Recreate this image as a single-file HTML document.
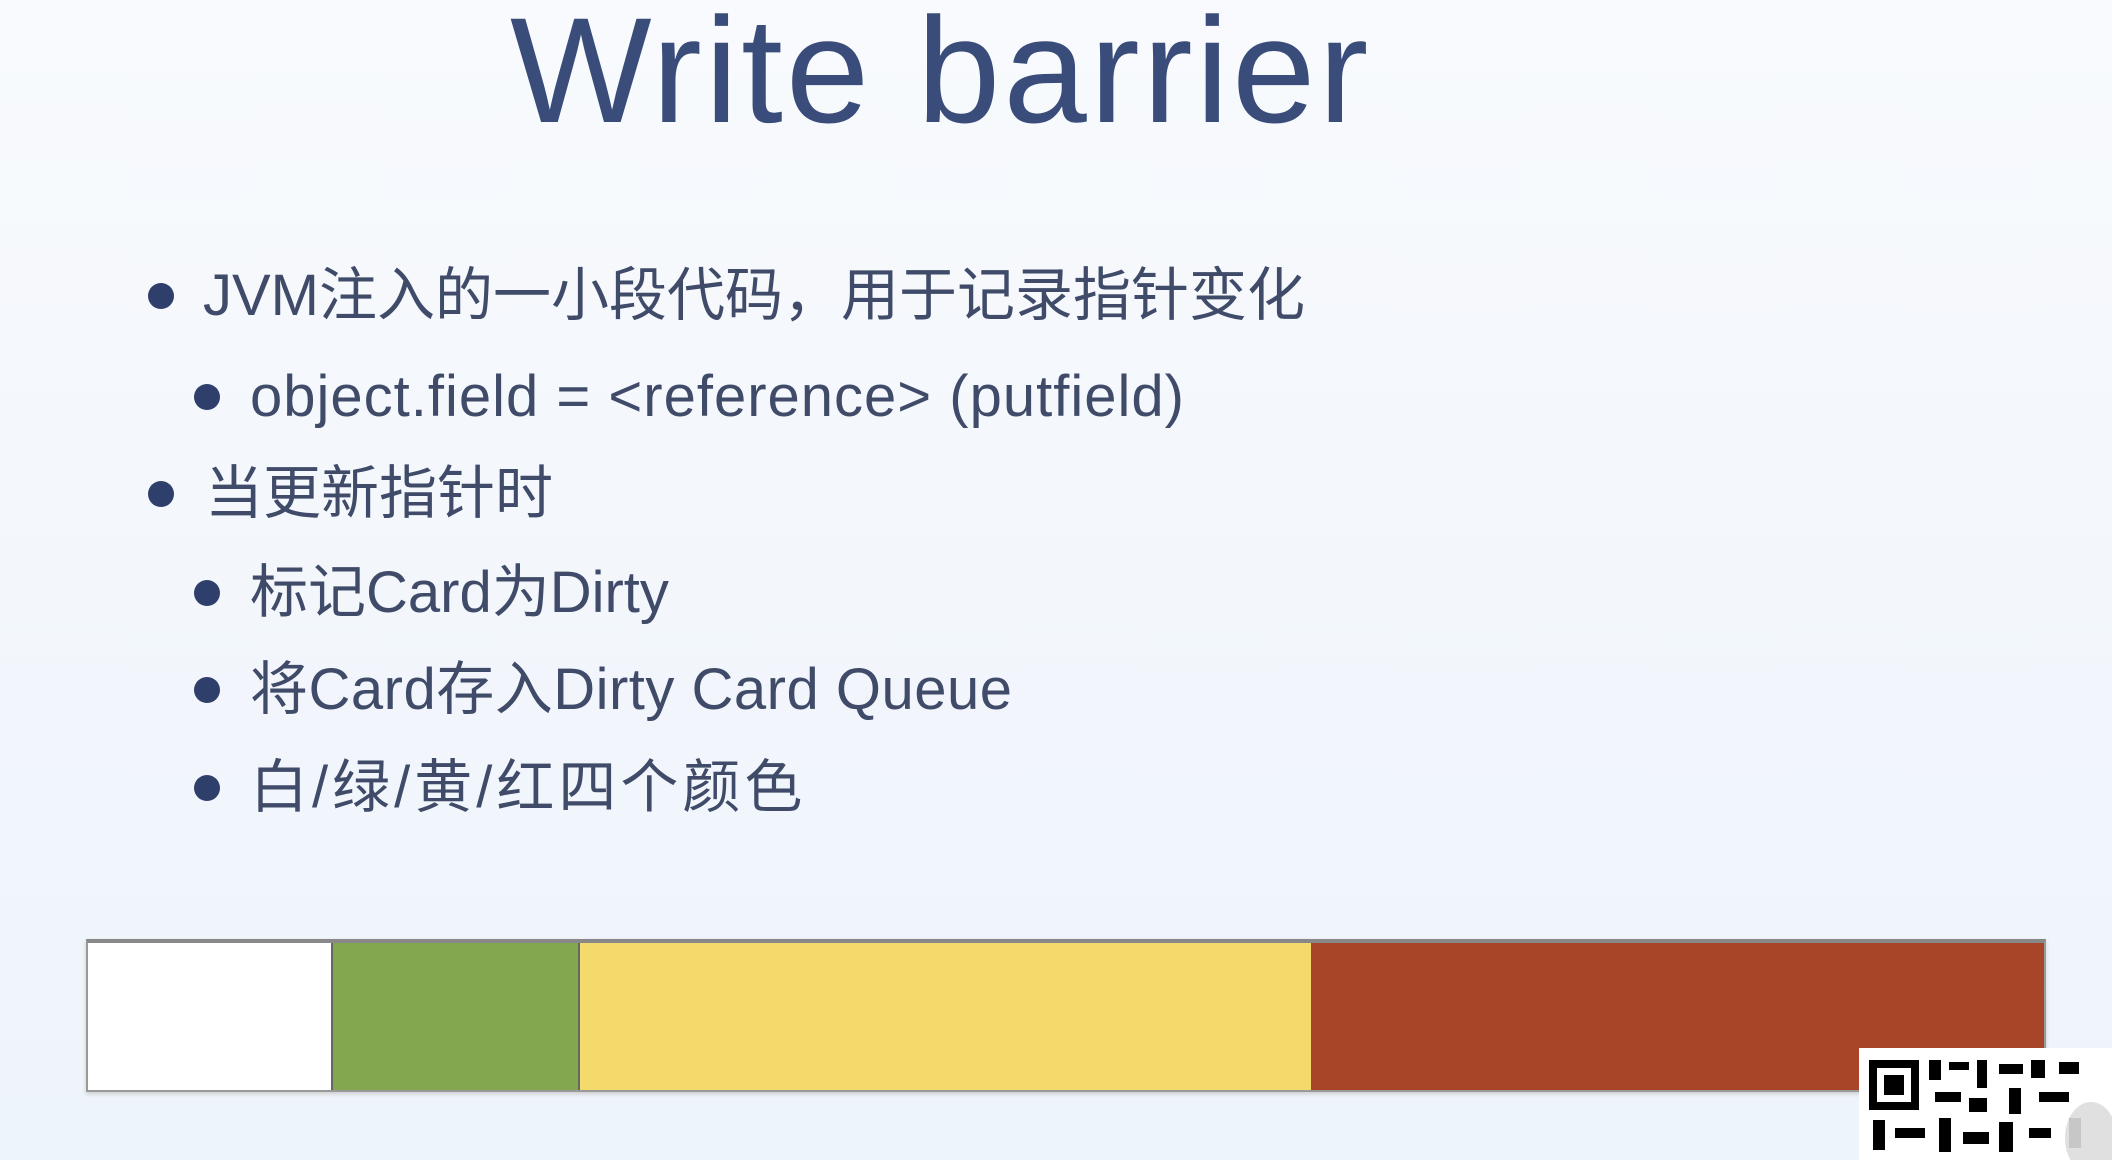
<!DOCTYPE html>
<html><head><meta charset="utf-8"><style>
body{margin:0;width:2112px;height:1160px;overflow:hidden;background:linear-gradient(#f8fafd,#eef4fb);font-family:"Liberation Sans","Noto Sans CJK SC",sans-serif;position:relative}
.t{position:absolute;left:510px;top:-16px;font-size:150px;color:#3a4d7a;letter-spacing:3px;white-space:nowrap}
.l{position:absolute;font-size:58px;color:#3f4b68;white-space:nowrap;line-height:60px}
.d{position:absolute;width:26px;height:26px;border-radius:50%;background:#2f3f6c}
.bar{position:absolute;left:86px;top:939px;width:1960px;height:153px;border:2px solid #999;border-top:4px solid #888;box-sizing:border-box;display:flex;box-shadow:0 2px 4px #ccc}
.bar div{height:100%}
</style></head><body>
<div class="t">Write barrier</div>
<div class="d" style="left:148px;top:283px"></div><div class="l" style="left:203px;top:266px">JVM注入的一小段代码，用于记录指针变化</div>
<div class="d" style="left:194px;top:384px"></div><div class="l" style="left:250px;top:367px;letter-spacing:1px">object.field = &lt;reference&gt; (putfield)</div>
<div class="d" style="left:148px;top:481px"></div><div class="l" style="left:205px;top:464px">当更新指针时</div>
<div class="d" style="left:194px;top:580px"></div><div class="l" style="left:250px;top:563px">标记Card为Dirty</div>
<div class="d" style="left:194px;top:677px"></div><div class="l" style="left:250px;top:660px;letter-spacing:0.5px">将Card存入Dirty Card Queue</div>
<div class="d" style="left:194px;top:775px"></div><div class="l" style="left:250px;top:758px;letter-spacing:4px">白/绿/黄/红四个颜色</div>
<div class="bar"><div style="width:243px;background:#fff;border-right:2px solid #666"></div><div style="width:245px;background:#83a74e;border-right:2px solid #666"></div><div style="width:731px;background:#f4d96b"></div><div style="flex:1;background:#a84428"></div></div>
<svg style="position:absolute;left:1859px;top:1048px" width="253" height="112" viewBox="0 0 253 112">
<rect width="253" height="112" fill="#fff"/>
<rect x="10" y="12" width="50" height="50" fill="#000"/><rect x="18" y="20" width="34" height="34" fill="#fff"/><rect x="25" y="27" width="20" height="20" fill="#000"/>
<g fill="#000"><rect x="70" y="12" width="12" height="20"/><rect x="90" y="14" width="20" height="8"/><rect x="118" y="12" width="10" height="28"/><rect x="140" y="16" width="24" height="10"/><rect x="172" y="12" width="14" height="18"/><rect x="200" y="14" width="20" height="12"/><rect x="76" y="44" width="26" height="10"/><rect x="110" y="50" width="18" height="14"/><rect x="150" y="40" width="12" height="26"/><rect x="180" y="44" width="30" height="10"/><rect x="14" y="72" width="12" height="30"/><rect x="36" y="80" width="30" height="10"/><rect x="80" y="70" width="12" height="34"/><rect x="104" y="84" width="26" height="12"/><rect x="140" y="74" width="14" height="30"/><rect x="170" y="80" width="22" height="10"/><rect x="210" y="70" width="12" height="30"/></g>
<ellipse cx="232" cy="90" rx="26" ry="36" fill="#ddd" opacity=".9"/>
</svg>
</body></html>
